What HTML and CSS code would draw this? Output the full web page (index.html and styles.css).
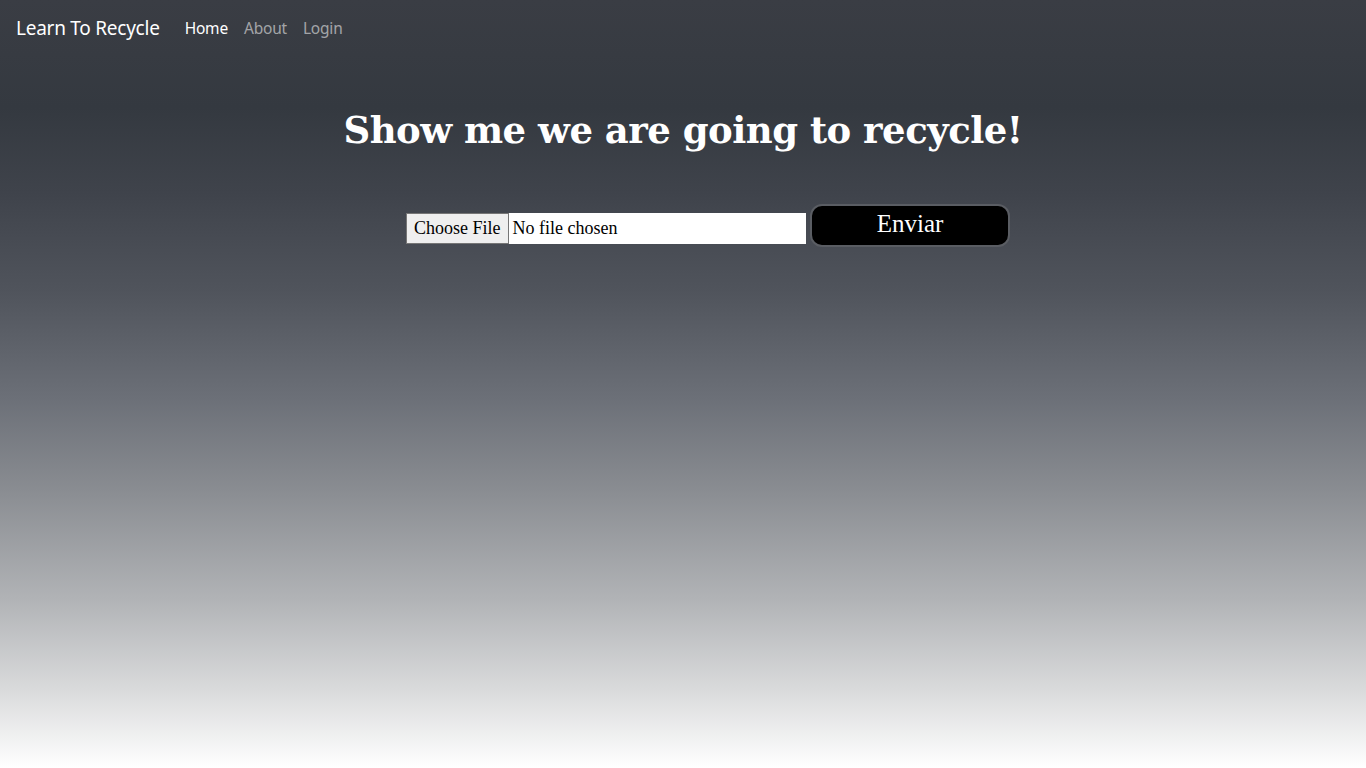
FILE: index.html
```html
<!DOCTYPE html>
<html lang="en">
<head>
<meta charset="utf-8">
<title>Learn To Recycle</title>
<link rel="stylesheet" href="styles.css">
</head>
<body>
<nav class="navbar">
  <a class="brand" href="#">Learn To Recycle</a>
  <ul class="nav">
    <li><a class="nav-link active" href="#">Home</a></li>
    <li><a class="nav-link" href="#">About</a></li>
    <li><a class="nav-link" href="#">Login</a></li>
  </ul>
</nav>
<main class="main">
  <h1 class="title">Show me we are going to recycle!</h1>
  <form class="upload">
    <input class="file" type="file">
    <button class="send" type="button">Enviar</button>
  </form>
</main>
</body>
</html>
```
FILE: styles.css
```css
html, body {
  margin: 0;
  padding: 0;
  height: 100%;
}
body {
  min-height: 768px;
  background: linear-gradient(to bottom, #3a3d44 0%, #343940 14%, #3f434b 25%, #50545c 38%, #6c7078 52%, #8a8d92 64%, #b1b3b6 78%, #dadbdc 90%, #ffffff 100%);
  font-family: "Liberation Serif", serif;
}
.navbar {
  display: flex;
  align-items: center;
  height: 56px;
  padding: 0 16px;
  box-sizing: border-box;
}
.brand {
  font-family: "Noto Sans", sans-serif;
  font-size: 19px;
  color: #fff;
  text-decoration: none;
  margin-right: 17px;
  letter-spacing: -0.25px;
}
.nav {
  display: flex;
  list-style: none;
  margin: 0;
  padding: 0;
}
.nav-link {
  display: block;
  padding: 8px 8px;
  font-family: "Noto Sans", sans-serif;
  font-size: 15.5px;
  color: rgba(255,255,255,0.55);
  text-decoration: none;
  letter-spacing: -0.2px;
}
.nav-link.active {
  color: #fff;
}
.main {
  display: flex;
  flex-direction: column;
  align-items: center;
}
.title {
  margin: 50px 0 0;
  font-family: "DejaVu Serif", serif;
  font-weight: bold;
  font-size: 37px;
  line-height: 48px;
  color: #fff;
  letter-spacing: -0.5px;
}
.upload {
  display: flex;
  align-items: flex-start;
  gap: 4px;
  margin-top: 50px;
  padding-left: 50px;
}
.file {
  width: 400px;
  height: 31px;
  margin-top: 9px;
  box-sizing: border-box;
  background: #fff;
  font-family: "Liberation Serif", serif;
  font-size: 18px;
  color: #000;
}
.file::file-selector-button {
  height: 31px;
  margin: 0 4px 0 0;
  padding: 0 7px;
  font-family: "Liberation Serif", serif;
  font-size: 18px;
  background: #efefef;
  border: 1px solid #767676;
  border-radius: 0;
  color: #000;
}
.send {
  width: 200px;
  height: 43px;
  background: #000;
  color: #fff;
  border: 2px solid #5a5d63;
  border-radius: 12px;
  font-family: "Liberation Serif", serif;
  font-size: 25px;
  line-height: 36px;
  padding: 0 0 3px;
}
```
